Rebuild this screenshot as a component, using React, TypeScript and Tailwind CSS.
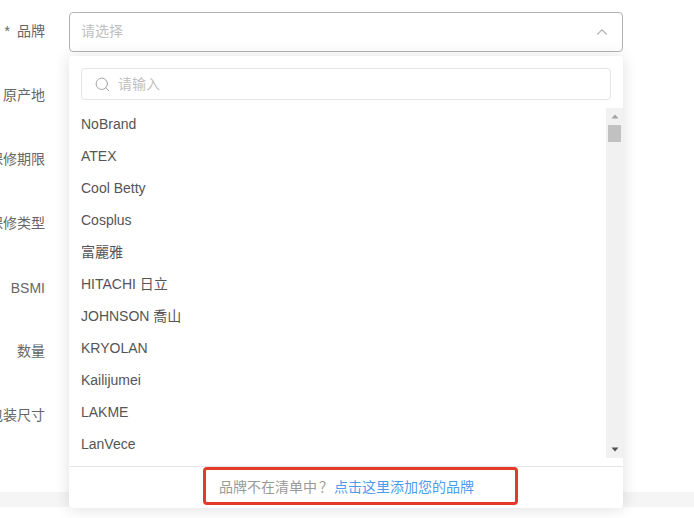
import React from 'react';
import { ChevronUp, Search } from 'lucide-react';

const labels = ['品牌', '原产地', '保修期限', '保修类型', 'BSMI', '数量', '包装尺寸'];
const brands = ['NoBrand', 'ATEX', 'Cool Betty', 'Cosplus', '富麗雅', 'HITACHI 日立', 'JOHNSON 喬山', 'KRYOLAN', 'Kailijumei', 'LAKME', 'LanVece'];

const font = "font-['Liberation_Sans','Noto_Sans_CJK_SC',sans-serif]";

export default function App() {
    return (
        <div className={`relative h-[518px] w-[694px] overflow-hidden bg-white text-sm ${font}`}>
            {/* Form behind the dropdown */}
            <div className="h-[492px] bg-white pt-3 shadow-[0_1px_3px_rgba(0,0,0,0.06)]">
                {labels.map((label, i) => (
                    <div key={label} className="mb-6 flex h-10 items-center">
                        <div className={`flex w-[45px] shrink-0 justify-end whitespace-nowrap text-[#666] ${label === 'BSMI' ? '' : 'pb-[2px]'}`}>
                            {i === 0 && <span className="mr-[7px]">*</span>}
                            {label}
                        </div>
                        {i === 0 && (
                            <div className="ml-6 flex h-10 w-[554px] items-center justify-between rounded border border-[#b3b3b3] bg-white pl-3 pr-[11px] text-[#bfbfbf]">
                                <span className="-ml-px pb-[2px]">请选择</span>
                                <ChevronUp size={18} strokeWidth={1.5} className="text-[#b3b3b3]" />
                            </div>
                        )}
                    </div>
                ))}
            </div>
            <div className="h-[15px] bg-[#f5f5f5]" />

            {/* Dropdown */}
            <div className="absolute left-[69px] top-[56px] flex h-[452px] w-[554px] flex-col rounded bg-white shadow-[0_1px_16px_rgba(0,0,0,0.13)]">
                <div className="px-3 pt-3">
                    <div className="flex h-8 items-center rounded border border-[#e5e5e5] pl-3 text-[#bfbfbf]">
                        <Search size={17} strokeWidth={1.25} className="text-[#999]" />
                        <span className="ml-[7px]">请输入</span>
                    </div>
                </div>
                <div className="mt-2 flex h-[350px] shrink-0">
                    <div className="min-w-0 flex-1 overflow-hidden">
                        {brands.map((brand) => (
                            <div key={brand} className="flex h-8 items-center pl-3 text-[#555]">
                                {brand}
                            </div>
                        ))}
                    </div>
                    <div className="flex w-[17px] shrink-0 flex-col items-center bg-[#f1f1f1]">
                        <svg width="8" height="5" viewBox="0 0 8 5" className="mt-[6px]">
                            <path d="M4 0.5 L7.5 4.5 H0.5 Z" fill="#a3a3a3" />
                        </svg>
                        <div className="mt-[6px] h-[17px] w-[13px] bg-[#c1c1c1]" />
                        <svg width="8" height="5" viewBox="0 0 8 5" className="mb-[6px] mt-auto">
                            <path d="M0.5 0.5 H7.5 L4 4.5 Z" fill="#505050" />
                        </svg>
                    </div>
                </div>
                <div className="mt-2 border-t border-[#e5e5e5] pl-[134px]">
                    <div className="flex h-[38px] w-[315px] items-center rounded-sm border-[3px] border-[#e53a28] pl-[13px] pt-[2px] text-[#999]">
                        品牌不在清单中
                        <span className="ml-[2px]">？</span>
                        <span className="ml-px text-[#4a9cf0]">点击这里添加您的品牌</span>
                    </div>
                </div>
            </div>
        </div>
    );
}
